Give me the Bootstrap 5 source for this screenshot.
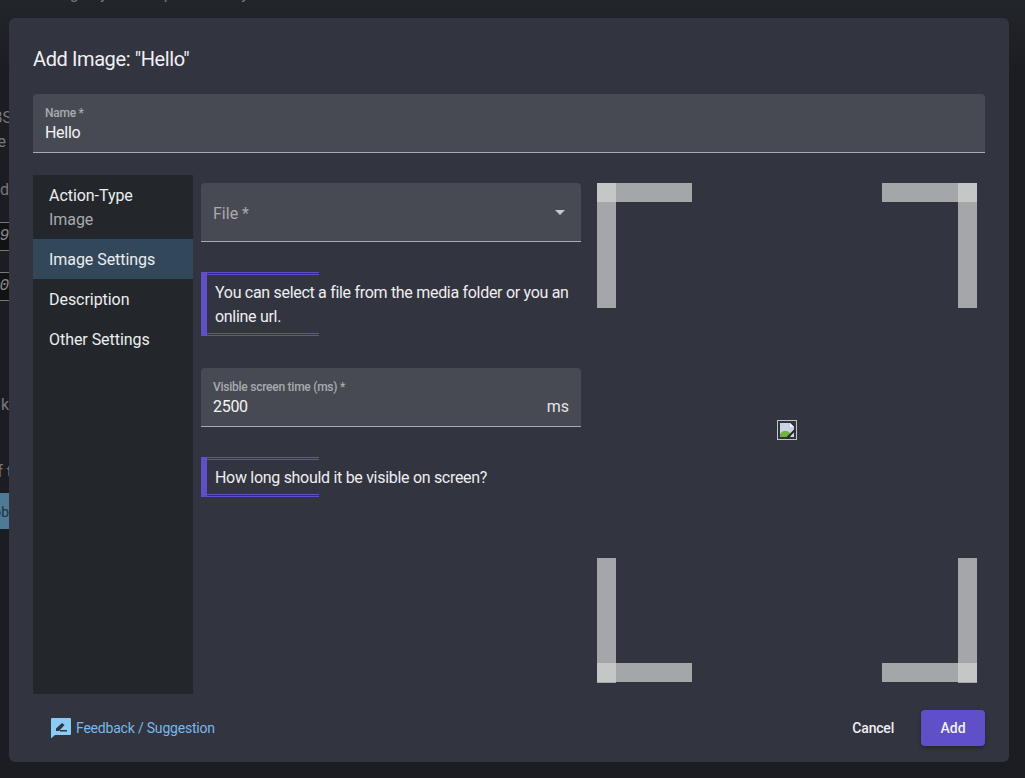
<!DOCTYPE html>
<html lang="en">
<head>
  <meta charset="UTF-8" />
  <title>Add Image</title>
  <link href="https://cdn.jsdelivr.net/npm/bootstrap@5.3.2/dist/css/bootstrap.min.css" rel="stylesheet" />
  <style>
    html, body { height: 100%; }
    body {
      font-family: Roboto, "Liberation Sans", sans-serif;
      background: linear-gradient(#22252a, #1c1d22 70px);
      color: #f0f0f2;
      overflow: hidden;
      position: relative;
    }

    /* page behind the dialog, only its edge is visible */
    .behind { position: absolute; left: 0; top: 0; width: 9px; height: 100%; overflow: hidden; color: #77787c; font-size: 16px; white-space: nowrap; }
    .behind span { position: absolute; right: 0; line-height: 20px; }
    .behind .cut { right: -3px; }
    .behind .mono { font-family: "Liberation Mono", monospace; font-style: italic; background: #111214; border-top: 1px solid #77787c; border-bottom: 1px solid #77787c; height: 29px; width: 9px; line-height: 27px; direction: rtl; overflow: hidden; color: #888; }
    .behind .blue { background: #4f7a96; color: #24303a; font-size: 14px; top: 493px; height: 36px; width: 9px; line-height: 38px; direction: rtl; overflow: hidden; }
    .behind-top { position: absolute; left: 33px; top: -16px; color: #77787c; font-size: 16px; line-height: 20px; white-space: nowrap; }

    .dialog-wrap { padding: 18px 16px 16px 9px; position: relative; }
    .dialog-box.modal-content {
      width: 1000px;
      height: 744px;
      background-color: #32343f;
      border: 0;
      border-radius: 6px;
      padding: 24px 24px 16px;
      color: #f0f0f2;
    }
    .dialog-title { font-size: 20px; font-weight: 400; line-height: 34px; margin: 0 0 18px; letter-spacing: -.4px; }

    .field-box {
      background-color: #484a53;
      border-bottom: 1px solid #aaabb2;
      border-radius: 4px 4px 0 0;
      height: 59px;
      flex-shrink: 0;
      padding: 11px 12px 0;
    }
    .field-label { display: block; font-size: 12px; line-height: 16px; color: #a9aaaf; font-weight: 500; margin: 0; letter-spacing: -.25px; }
    .field-input { background: transparent; border: 0; outline: 0; color: #f4f4f6; font-size: 16px; line-height: 24px; padding: 0; width: 100%; font-family: inherit; letter-spacing: -.3px; display: block; }
    .field-suffix { font-size: 16px; line-height: 24px; color: #e4e4e8; }

    .select-box.form-select {
      background-color: #484a53;
      background-image: url("data:image/svg+xml,%3Csvg xmlns='http://www.w3.org/2000/svg' width='10' height='5'%3E%3Cpath d='M0 0h10L5 5z' fill='%23c8c8cc'/%3E%3C/svg%3E");
      background-position: right 16px center;
      background-size: 10px 5px;
      border: 0;
      border-bottom: 1px solid #aaabb2;
      border-radius: 4px 4px 0 0;
      color: #a9aaaf;
      font-size: 16px;
      height: 59px;
      padding: 3px 12px 0;
    }

    .side-menu { width: 160px; height: 519px; background-color: #23272b; flex-shrink: 0; }
    .side-menu .nav-link { color: #eceef0; font-size: 16px; font-weight: 400; line-height: 24px; padding: 9px 16px 7px; border-radius: 0; letter-spacing: -.05px; }
    .side-menu .nav-link.active { background-color: #33475b; color: #eceef0; }
    .side-menu .side-sub { display: block; color: #a9abad; font-weight: 400; }

    .form-col { width: 380px; flex-shrink: 0; padding-top: 8px; }
    .hint-box { position: relative; border-left: 6px solid #5f4fc8; padding: 9px 8px 7px; font-size: 16px; line-height: 24px; color: #eeeef1; letter-spacing: -.3px; }
    .hint-box::before, .hint-box::after { content: ""; position: absolute; left: 0; width: 112px; height: 3px; border-top: 3px double #5f4fc8; }
    .hint-box::before { top: 0; }
    .hint-box::after { bottom: 0; }

    .preview { position: relative; width: 380px; height: 500px; margin-top: 8px; flex-shrink: 0; }
    .preview i { position: absolute; background: rgba(210, 210, 210, .724); }
    .preview .hz { width: 95px; height: 19px; }
    .preview .vt { width: 19px; height: 125px; }
    .preview .tp { top: 0; }
    .preview .bt { bottom: 0; }
    .preview .hz.bt { bottom: 1px; }
    .preview .lf { left: 0; }
    .preview .rt { right: 0; }
    .broken-img { width: 20px; height: 20px; position: absolute; left: 180px; top: 237px; }

    .feedback-link { color: #7ab8e8; font-size: 14px; text-decoration: none; letter-spacing: -.2px; gap: 5px; margin-left: 18px; }
    .btn-cancel.btn { color: #eeeef1; font-size: 14px; font-weight: 500; letter-spacing: -.2px; border: 0; padding: 0 27px 0 0; height: 36px; }
    .btn-add.btn { background-color: #5f4fc8; border: 0; color: #f0f0f5; font-size: 14px; font-weight: 500; width: 64px; height: 36px; padding: 0; border-radius: 4px; box-shadow: 0 2px 4px rgba(0, 0, 0, .3); }
  </style>
</head>
<body>
  <div class="behind-top">Change by these up to this key</div>
  <div class="behind">
    <span class="cut" style="top:108px">BS</span>
    <span style="top:132px;right:3px">e</span>
    <span style="top:180px">ld</span>
    <span class="mono" style="top:222px">y9</span>
    <span class="mono" style="top:272px">10</span>
    <span style="top:395px">k</span>
    <span class="cut" style="top:462px">f t</span>
    <span class="blue">ob</span>
  </div>

  <div class="dialog-wrap">
    <div class="modal-content dialog-box">
      <h5 class="dialog-title">Add Image: "Hello"</h5>

      <div class="field-box mb-4">
        <label class="field-label">Name *</label>
        <input class="field-input" type="text" value="Hello" />
      </div>

      <div class="d-flex gap-2" style="margin-top:-2px">
        <nav class="side-menu nav flex-column align-content-stretch">
          <a class="nav-link" href="#">Action-Type<span class="side-sub">Image</span></a>
          <a class="nav-link active" href="#">Image Settings</a>
          <a class="nav-link" href="#">Description</a>
          <a class="nav-link" href="#">Other Settings</a>
        </nav>

        <div class="form-col">
          <select class="form-select select-box"><option>File *</option></select>
          <div class="hint-box" style="margin-top:30px">You can select a file from the media folder or you an online url.</div>
          <div class="field-box" style="margin-top:32px">
            <label class="field-label">Visible screen time (ms) *</label>
            <div class="d-flex align-items-center">
              <input class="field-input" type="text" value="2500" />
              <span class="field-suffix">ms</span>
            </div>
          </div>
          <div class="hint-box" style="margin-top:30px">How long should it be visible on screen?</div>
        </div>

        <div class="preview ms-2">
          <i class="hz tp lf"></i><i class="vt tp lf"></i>
          <i class="hz tp rt"></i><i class="vt tp rt"></i>
          <i class="hz bt lf"></i><i class="vt bt lf"></i>
          <i class="hz bt rt"></i><i class="vt bt rt"></i>
          <svg class="broken-img" viewBox="0 0 20 20">
            <rect x=".5" y=".5" width="19" height="19" fill="#32343f" stroke="#c4c4c4"/>
            <path d="M3 3h10l4 4v10H3z" fill="#c9d2e6"/>
            <path d="M13 3v4h4z" fill="#fff"/>
            <path d="M3 17v-3c3-4 7-4 10-1l1 4z" fill="#6fb33c"/>
            <path d="M10 18 18 10" stroke="#24262c" stroke-width="2"/>
          </svg>
        </div>
      </div>

      <div class="d-flex align-items-center justify-content-between" style="margin-top:16px">
        <a class="feedback-link d-flex align-items-center" href="#">
          <svg width="20" height="20" viewBox="0 0 20 20">
            <path d="M1 0h18a1 1 0 0 1 1 1v15a1 1 0 0 1-1 1H4l-3.500 3H0V1a1 1 0 0 1 1-1z" fill="#8ccbf5"/>
            <path d="M5 13v-2.500L11 5l2.500 2-5.500 6z" fill="#32343f"/>
            <path d="M9 12h7v1.500H9z" fill="#32343f"/>
          </svg>
          Feedback / Suggestion
        </a>
        <div class="d-flex align-items-center">
          <button class="btn btn-cancel" type="button">Cancel</button>
          <button class="btn btn-add" type="button">Add</button>
        </div>
      </div>
    </div>
  </div>

  <script src="https://cdn.jsdelivr.net/npm/bootstrap@5.3.2/dist/js/bootstrap.bundle.min.js"></script>
</body>
</html>
